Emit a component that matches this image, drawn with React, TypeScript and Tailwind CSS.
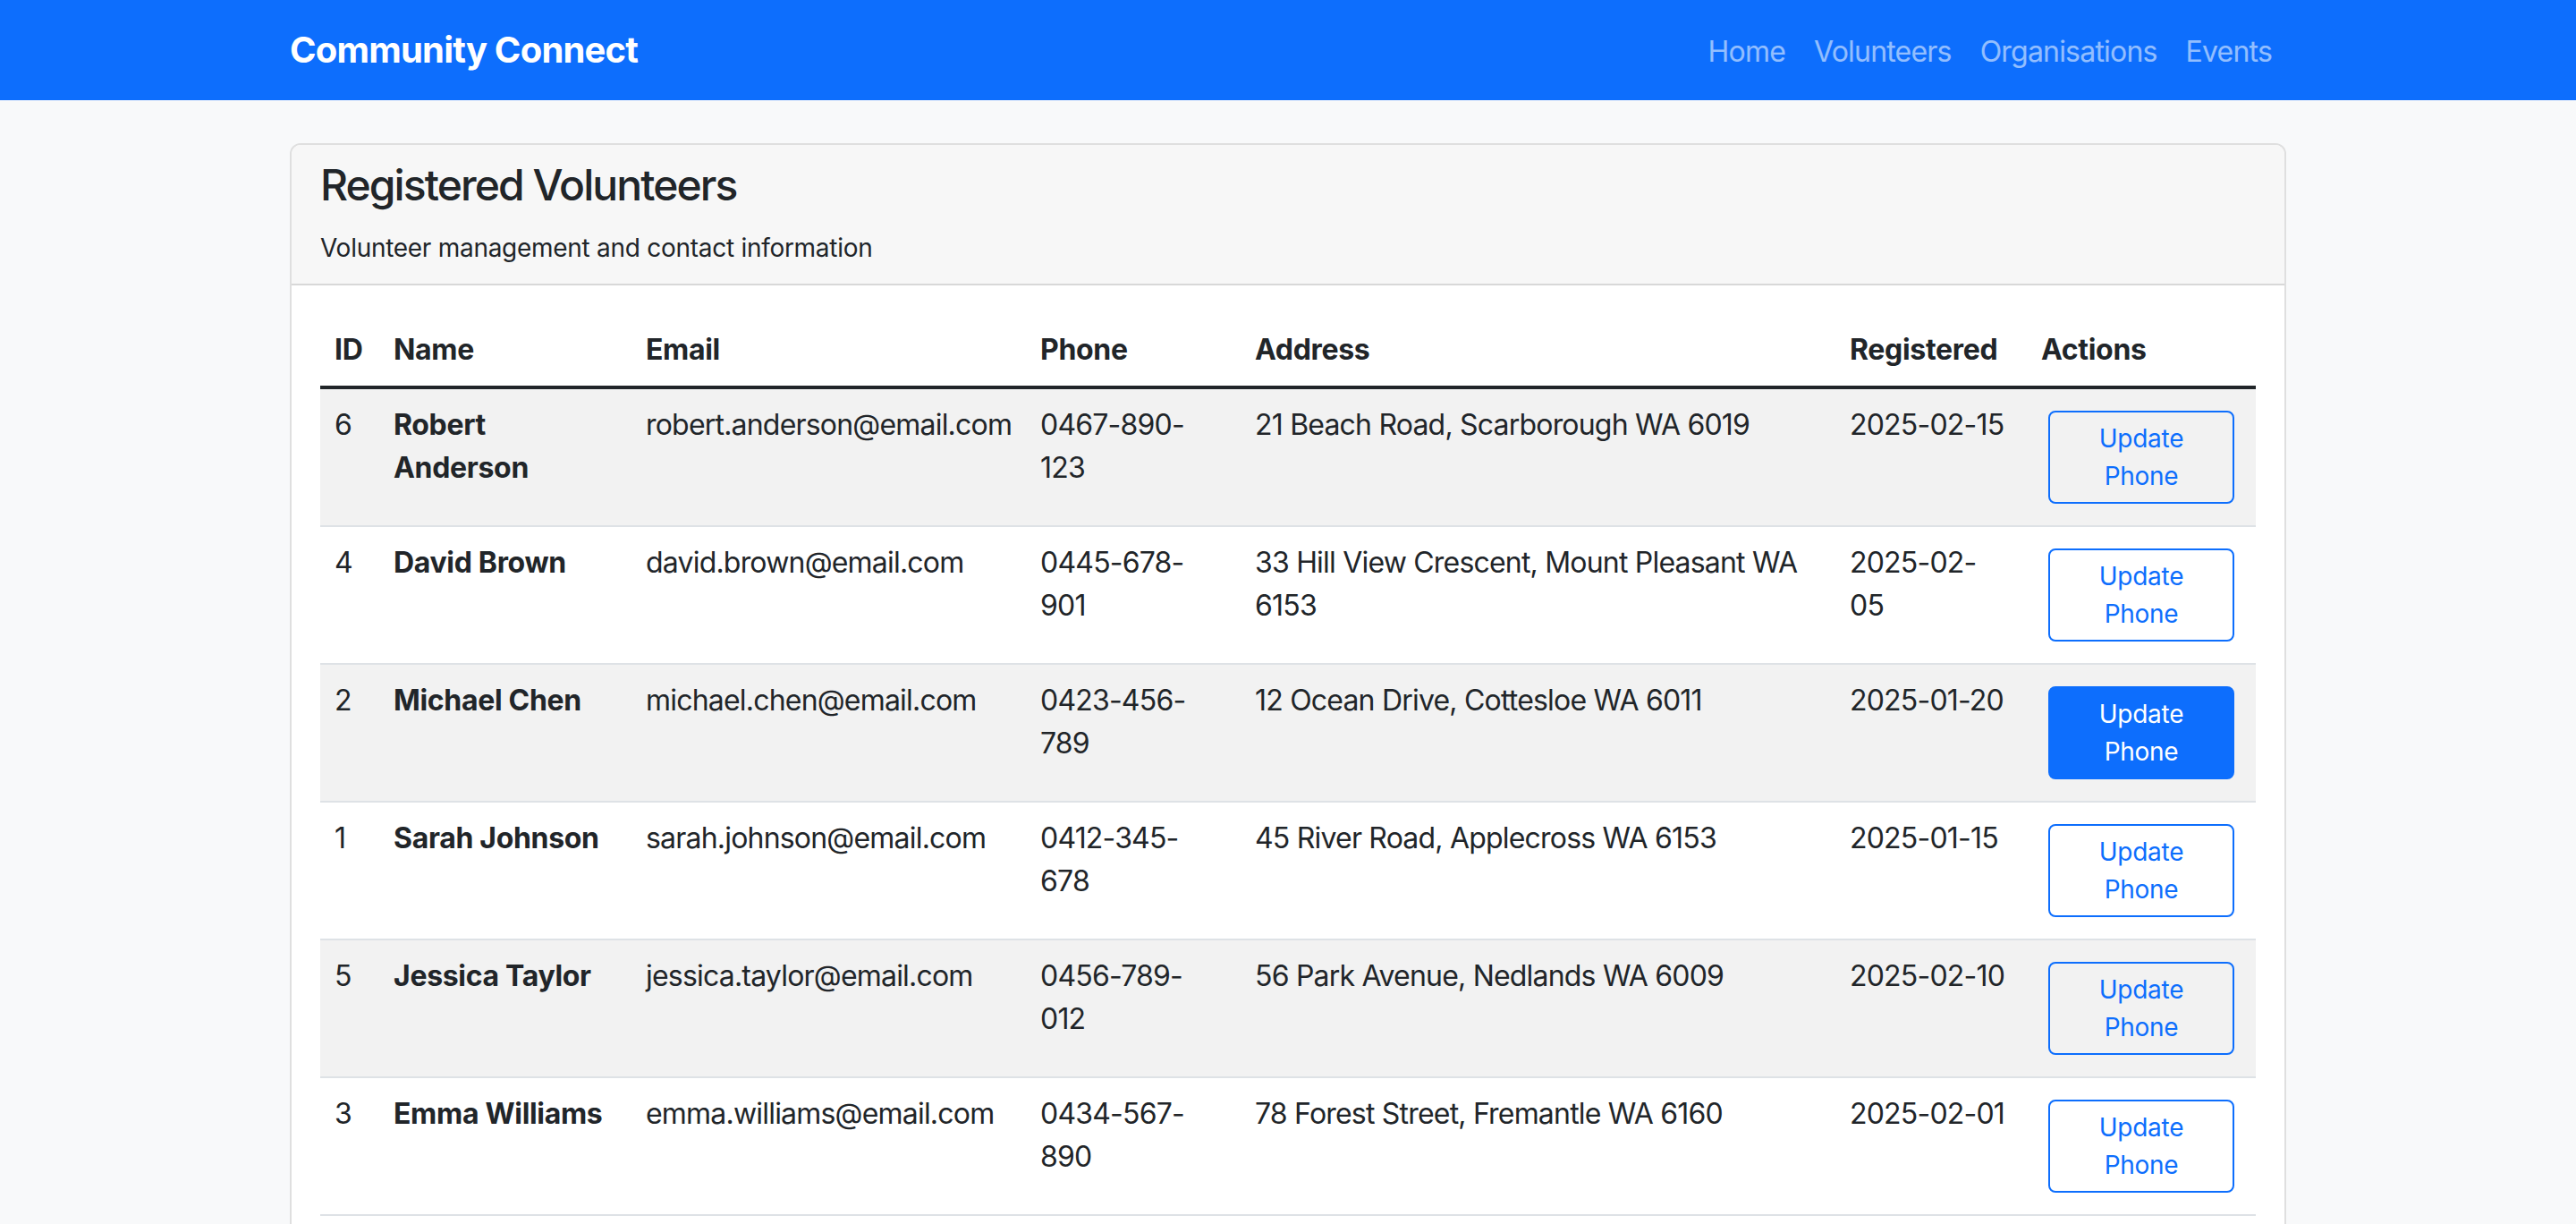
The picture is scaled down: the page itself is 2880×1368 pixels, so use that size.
const navLinks = ["Home", "Volunteers", "Organisations", "Events"];

// line breaks follow the wrapping seen in the table
const volunteers = [
  {
    id: 6,
    name: ["Robert", "Anderson"],
    email: "robert.anderson@email.com",
    phone: ["0467-890-", "123"],
    address: ["21 Beach Road, Scarborough WA 6019"],
    registered: ["2025-02-15"],
  },
  {
    id: 4,
    name: ["David Brown"],
    email: "david.brown@email.com",
    phone: ["0445-678-", "901"],
    address: ["33 Hill View Crescent, Mount Pleasant WA", "6153"],
    registered: ["2025-02-", "05"],
  },
  {
    id: 2,
    name: ["Michael Chen"],
    email: "michael.chen@email.com",
    phone: ["0423-456-", "789"],
    address: ["12 Ocean Drive, Cottesloe WA 6011"],
    registered: ["2025-01-20"],
    active: true,
  },
  {
    id: 1,
    name: ["Sarah Johnson"],
    email: "sarah.johnson@email.com",
    phone: ["0412-345-", "678"],
    address: ["45 River Road, Applecross WA 6153"],
    registered: ["2025-01-15"],
  },
  {
    id: 5,
    name: ["Jessica Taylor"],
    email: "jessica.taylor@email.com",
    phone: ["0456-789-", "012"],
    address: ["56 Park Avenue, Nedlands WA 6009"],
    registered: ["2025-02-10"],
  },
  {
    id: 3,
    name: ["Emma Williams"],
    email: "emma.williams@email.com",
    phone: ["0434-567-", "890"],
    address: ["78 Forest Street, Fremantle WA 6160"],
    registered: ["2025-02-01"],
  },
];

function Lines({ lines }: { lines: string[] }) {
  return (
    <>
      {lines.map((l, i) => (
        <span key={i} className="block">
          {l}
        </span>
      ))}
    </>
  );
}

export default function App() {
  return (
    <div className="min-h-screen bg-[#f8f9fa] font-['Inter',sans-serif] text-[32px] leading-[48px] tracking-[-0.025em] text-[#212529]">
      {/* Navbar */}
      <nav className="bg-[#0d6efd] py-4">
        <div className="mx-auto flex w-[2280px] items-center justify-between px-6">
          <a href="#" className="py-[10px] text-[40px] leading-[60px] font-bold text-white">
            Community Connect
          </a>
          <ul className="flex">
            {navLinks.map((l) => (
              <li key={l}>
                <a href="#" className="block px-4 pt-[18px] pb-[14px] text-white/55">
                  {l}
                </a>
              </li>
            ))}
          </ul>
        </div>
      </nav>

      <main className="mx-auto mt-12 w-[2280px] px-6">
        <div className="overflow-hidden rounded-xl border-2 border-[rgba(0,0,0,0.125)] bg-white">
          {/* Card header */}
          <div className="border-b-2 border-[rgba(0,0,0,0.125)] bg-[#f7f7f7] px-8 py-4">
            <h4 className="mb-4 text-[48px] leading-[57.6px] font-medium tracking-[-0.04em]">
              Registered Volunteers
            </h4>
            <p>
              <span className="text-[28px] tracking-[-0.01em]">
                Volunteer management and contact information
              </span>
            </p>
          </div>

          {/* Card body */}
          <div className="p-8">
            <table className="w-full table-fixed">
              <thead>
                <tr className="text-left font-bold tracking-[-0.01em]">
                  <th className="w-[66px] border-b-4 border-[#212529] p-4">ID</th>
                  <th className="w-[282px] border-b-4 border-[#212529] p-4">Name</th>
                  <th className="w-[441px] border-b-4 border-[#212529] p-4">Email</th>
                  <th className="w-[240px] border-b-4 border-[#212529] p-4">Phone</th>
                  <th className="w-[665px] border-b-4 border-[#212529] p-4">Address</th>
                  <th className="w-[214px] border-b-4 border-[#212529] p-4">Registered</th>
                  <th className="w-[256px] border-b-4 border-[#212529] p-4">Actions</th>
                </tr>
              </thead>
              <tbody>
                {volunteers.map((v, i) => (
                  <tr
                    key={v.id}
                    className={`border-b-2 border-[#dee2e6] align-top whitespace-nowrap ${
                      i % 2 === 0 ? "bg-[#f2f2f2]" : "bg-white"
                    }`}
                  >
                    <td className="p-4">{v.id}</td>
                    <td className="p-4 font-bold tracking-[-0.01em]">
                      <Lines lines={v.name} />
                    </td>
                    <td className="p-4">{v.email}</td>
                    <td className="p-4">
                      <Lines lines={v.phone} />
                    </td>
                    <td className="p-4">
                      <Lines lines={v.address} />
                    </td>
                    <td className="p-4">
                      <Lines lines={v.registered} />
                    </td>
                    <td className="p-4">
                      <button
                        className={`m-2 block w-[208px] rounded-lg border-2 border-[#0d6efd] px-4 py-2 text-center text-[28px] leading-[42px] tracking-[-0.01em] ${
                          v.active ? "bg-[#0d6efd] text-white" : "text-[#0d6efd]"
                        }`}
                      >
                        Update
                        <br />
                        Phone
                      </button>
                    </td>
                  </tr>
                ))}
              </tbody>
            </table>
          </div>
        </div>
      </main>
    </div>
  );
}
